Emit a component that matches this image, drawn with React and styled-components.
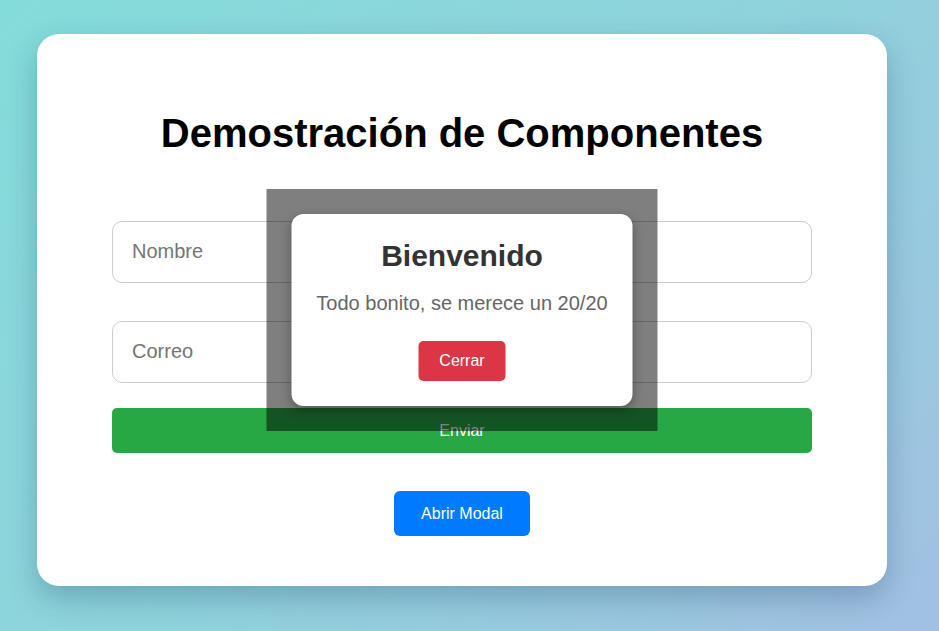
import React, { useState } from "react";
import styled, { createGlobalStyle } from "styled-components";

const GlobalStyle = createGlobalStyle`
  * { box-sizing: border-box; }
  html, body {
    margin: 0;
    padding: 0;
    height: 100%;
  }
  body {
    font-family: "Liberation Sans", Arial, sans-serif;
    background: linear-gradient(135deg, #84dcd9 0%, #8fd3dc 50%, #a2c0e3 100%);
    min-height: 631px;
  }
`;

const Page = styled.div`
  padding: 34px 52px 45px 37px;
`;

const Card = styled.div`
  position: relative;
  width: 850px;
  height: 552px;
  background: #fff;
  border-radius: 22px;
  box-shadow: 0 12px 30px rgba(0, 40, 80, 0.25);
  padding: 76px 75px 50px;
  display: flex;
  flex-direction: column;
  align-items: center;
`;

const Title = styled.h1`
  margin: 0 0 65px;
  font-size: 40px;
  line-height: 46px;
  font-weight: bold;
  color: #000;
  text-align: center;
`;

const Form = styled.form`
  width: 100%;
  display: flex;
  flex-direction: column;
`;

const Input = styled.input`
  width: 100%;
  height: 62px;
  padding: 0 19px 2px;
  border: 1px solid #ccc;
  border-radius: 10px;
  font-family: inherit;
  font-size: 20px;
  color: #333;
  outline: none;
  margin-bottom: ${(p) => p.$gap}px;
  &::placeholder { color: #757575; }
`;

const Button = styled.button`
  border: none;
  color: #fff;
  font-family: inherit;
  font-size: 16px;
  cursor: pointer;
  background: ${(p) => p.$bg};
  border-radius: ${(p) => p.$radius || 6}px;
  height: ${(p) => p.$h || 45}px;
  padding: 0 ${(p) => p.$px || 25}px;
`;

const SubmitButton = styled(Button)`
  width: 100%;
`;

const OpenButton = styled(Button)`
  margin-top: 38px;
  width: 136px;
  padding: 0;
`;

const Overlay = styled.div`
  position: absolute;
  left: 50%;
  top: 50%;
  transform: translate(-50%, -50%);
  width: 391px;
  height: 242px;
  background: rgba(0, 0, 0, 0.5);
  padding: 25px;
`;

const Modal = styled.div`
  width: 341px;
  height: 192px;
  background: #fff;
  border-radius: 12px;
  box-shadow: 0 4px 12px rgba(0, 0, 0, 0.3);
  display: flex;
  flex-direction: column;
  align-items: center;
  padding-top: 25px;
`;

const ModalTitle = styled.h2`
  margin: 0 0 19px;
  font-size: 30px;
  line-height: 34px;
  font-weight: bold;
  color: #333;
`;

const ModalText = styled.p`
  margin: 0 0 26px;
  font-size: 20px;
  line-height: 23px;
  color: #666;
`;

export default function App() {
  const [open, setOpen] = useState(true);
  return (
    <>
      <GlobalStyle />
      <Page>
        <Card>
          <Title>Demostración de Componentes</Title>
          <Form onSubmit={(e) => e.preventDefault()}>
            <Input placeholder="Nombre" $gap={38} />
            <Input placeholder="Correo" $gap={25} />
            <SubmitButton type="submit" $bg="#28a745" $radius={5}>
              Enviar
            </SubmitButton>
          </Form>
          <OpenButton $bg="#007bff" onClick={() => setOpen(true)}>
            Abrir Modal
          </OpenButton>
          {open && (
            <Overlay>
              <Modal>
                <ModalTitle>Bienvenido</ModalTitle>
                <ModalText>Todo bonito, se merece un 20/20</ModalText>
                <Button $bg="#dc3545" $radius={5} $h={40} $px={21} onClick={() => setOpen(false)}>
                  Cerrar
                </Button>
              </Modal>
            </Overlay>
          )}
        </Card>
      </Page>
    </>
  );
}
